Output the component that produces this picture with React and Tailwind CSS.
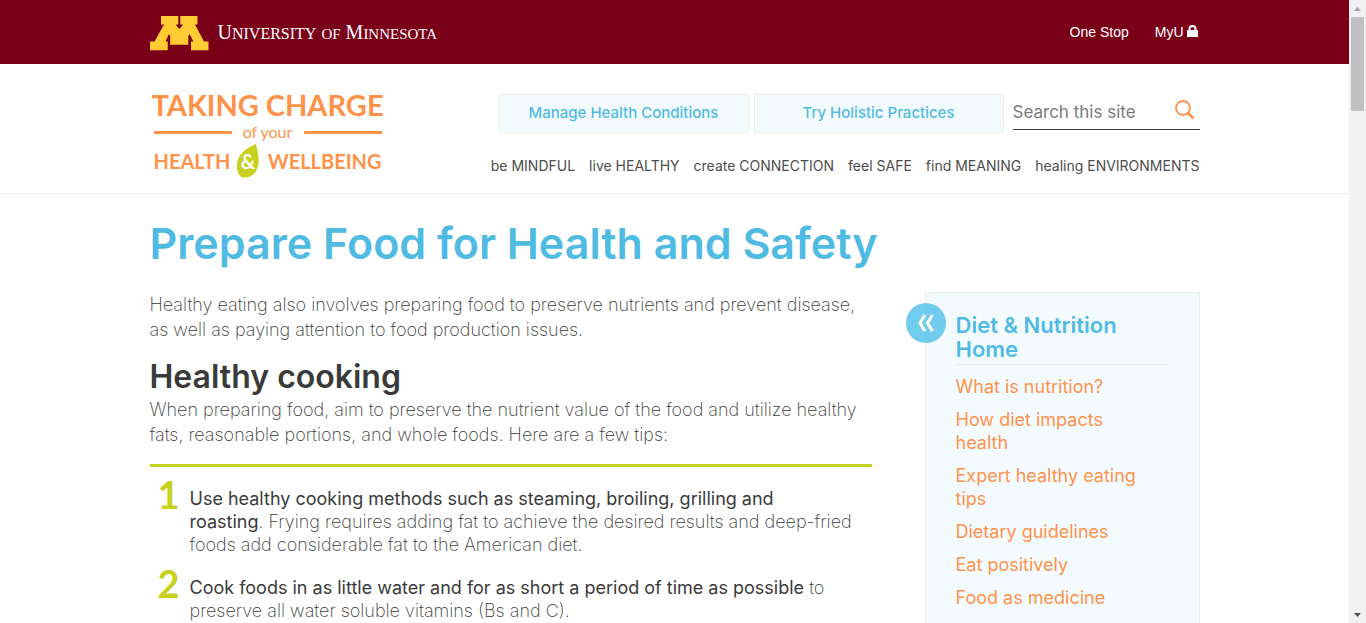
import React from 'react';

const topics = [
  ['be', 'MINDFUL'],
  ['live', 'HEALTHY'],
  ['create', 'CONNECTION'],
  ['feel', 'SAFE'],
  ['find', 'MEANING'],
  ['healing', 'ENVIRONMENTS'],
];

const dietLinks = [
  'What is nutrition?',
  'How diet impacts health',
  'Expert healthy eating tips',
  'Dietary guidelines',
  'Eat positively',
  'Food as medicine',
];

function UniversityBar() {
  return (
    <div className="bg-[#7a0019]">
      <div className="mx-auto flex h-16 max-w-[1050px] items-center justify-between text-white">
        <a href="#university" className="flex items-center gap-[9px] pt-[2px]">
          <svg viewBox="0 0 59 35" className="h-[35px] w-[59px]" aria-hidden="true">
            <path
              fill="#ffcc33"
              d="M11 0H28.300V8.500H26.300V9.500L29.300 13L32.500 9.500V8.500H30.300V0H47.500V8.500H45L54 25.500H58.500V34.200H41V25.500H43.500L39.500 18L38.300 20V28.700H20.200V20L19 18L15.500 25.500H17.700V34.200H0V25.500H4.500L14 8.500H11Z"
            />
          </svg>
          <span className="whitespace-nowrap font-['Liberation_Serif',serif] text-[20px] leading-6">
            U<span className="text-base">NIVERSITY</span> <span className="text-[15px]">OF</span> M
            <span className="text-[15px]">INNESOTA</span>
          </span>
        </a>
        <nav className="flex gap-[26px] font-['Liberation_Sans',sans-serif] text-sm">
          <a href="#onestop">One Stop</a>
          <a href="#myu" className="flex items-center gap-[3px] pr-[2px]">
            MyU
            <svg viewBox="0 0 11 12" className="mb-[2px] h-3 w-[11px]" aria-hidden="true">
              <path
                fill="currentColor"
                fillRule="evenodd"
                d="M1.500 5V4a4 4 0 0 1 8 0v1h.5a1 1 0 0 1 1 1v6H0V6a1 1 0 0 1 1-1ZM3.500 5h4V4a2 2 0 0 0-4 0Z"
              />
            </svg>
          </a>
        </nav>
      </div>
    </div>
  );
}

function SiteLogo() {
  return (
    <a
      href="#home"
      className="flex w-[236px] flex-col items-center whitespace-nowrap font-[Lato,sans-serif] text-[#ff9249]"
    >
      <span className="text-[29px] font-bold leading-[30px]">TAKING CHARGE</span>
      <span className="mt-[2px] flex w-[228px] items-center justify-between">
        <span className="h-[3px] w-[78px] bg-[#ff9249]" />
        <span className="text-base leading-5">of your</span>
        <span className="h-[3px] w-[78px] bg-[#ff9249]" />
      </span>
      <span className="flex w-[228px] items-center justify-between text-xl font-bold leading-[38px]">
        <span>HEALTH</span>
        <span className="mr-[2px] grid place-items-center">
          <svg viewBox="0 0 24 34" className="col-start-1 row-start-1 h-[34px] w-6" aria-hidden="true">
            <path fill="#c8d120" d="M20 0C10 4 0 11 1 23C1 29 4 32 6 33.500C12 34 17 32 20 27C25 18 22 9 20 0Z" />
          </svg>
          <span className="col-start-1 row-start-1 text-white">&amp;</span>
        </span>
        <span>WELLBEING</span>
      </span>
    </a>
  );
}

function SiteHeader() {
  return (
    <header className="border-b border-[#e6eeef]">
      <div className="mx-auto flex max-w-[1050px] justify-between pt-[26px] pb-[13px]">
        <SiteLogo />
        <div className="flex flex-col items-end pt-1">
          <div className="flex">
            <nav className="flex gap-[5px] text-[15px] font-medium text-[#4fbbe3]">
              {['Manage Health Conditions', 'Try Holistic Practices'].map((label) => (
                <a
                  key={label}
                  href="#topic"
                  className="flex h-[39px] w-[250px] items-center justify-center border border-[#ececec] bg-[#f4fbff]"
                >
                  {label}
                </a>
              ))}
            </nav>
            <form className="ml-[9px] flex h-9 w-[187px] items-center border-b border-[#3a3a3a]">
              <input
                type="search"
                aria-label="Search this site"
                placeholder="Search this site"
                className="w-0 flex-1 bg-transparent pt-[3px] text-[17px] outline-none placeholder:text-[#7b7b7b]"
              />
              <button type="button" aria-label="Search" className="mr-[5px] mb-1">
                <svg viewBox="0 0 20 20" className="h-5 w-5" fill="none" stroke="#ff9249" aria-hidden="true">
                  <circle cx="8" cy="8" r="7" strokeWidth="1.800" />
                  <path d="M13 13L18.600 18.600" strokeWidth="2.600" />
                </svg>
              </button>
            </form>
          </div>
          <nav className="mt-[21px] flex gap-[14px] whitespace-nowrap text-sm leading-6 text-[#4d4d4d]">
            {topics.map(([verb, noun]) => (
              <a key={noun} href={'#' + noun.toLowerCase()}>
                {verb} {noun}
              </a>
            ))}
          </nav>
        </div>
      </div>
    </header>
  );
}

function Tip({ number, children }) {
  return (
    <li className="flex">
      <span className="w-[30px] shrink-0 text-right font-[Lato,sans-serif] text-[38px] leading-[30px] font-bold text-[#c8d120]">
        {number}
      </span>
      <p className="pt-2 pl-[10px] text-lg leading-[23px]">{children}</p>
    </li>
  );
}

function Sidebar() {
  return (
    <aside className="relative min-h-[400px] w-[275px] shrink-0 border border-[#ececec] bg-[#f4fbff] px-[30px] pt-5">
      <button
        type="button"
        aria-label="Expand menu"
        className="absolute top-[10px] left-[-20px] flex h-10 w-10 items-center justify-center rounded-full bg-[#4fbfe9]/80"
      >
        <svg viewBox="0 0 18 18" className="h-[18px] w-[18px]" fill="none" stroke="white" strokeWidth="3" aria-hidden="true">
          <path d="M8 1L3 9L8 17M15.500 1L10.500 9L15.500 17" />
        </svg>
      </button>
      <h2 className="border-b border-[#e3eef1] pb-[3px] text-[22px] leading-6 font-semibold text-[#4fbbe3]">
        <a href="#diet" className="block">
          Diet &amp; Nutrition
          <br />
          Home
        </a>
      </h2>
      <ul className="flex flex-col gap-[10px] pt-[10px] pr-5 text-lg leading-[23px] text-[#ff9249]">
        {dietLinks.map((label) => (
          <li key={label}>
            <a href="#diet">{label}</a>
          </li>
        ))}
      </ul>
    </aside>
  );
}

function ScrollArrow({ down }) {
  return (
    <svg viewBox="0 0 17 17" className="h-[17px] w-[17px]" aria-hidden="true">
      {down ? <path fill="#505050" d="M5 7H12L8.500 11Z" /> : <path fill="#a3a3a3" d="M5 11H12L8.500 7Z" />}
    </svg>
  );
}

export default function App() {
  return (
    <div className="flex h-screen overflow-hidden bg-white font-[Inter,sans-serif] text-[#3a3a3a]">
      <div className="min-w-0 flex-1 overflow-hidden">
        <UniversityBar />
        <SiteHeader />
        <main className="mx-auto max-w-[1050px]">
          <h1 className="pt-6 text-[43px] leading-[50px] font-semibold text-[#4fbbe3]">
            Prepare Food for Health and Safety
          </h1>
          <div className="flex items-start justify-between pt-6">
            <article className="w-[740px] text-lg leading-[25px] font-extralight">
              <p>
                Healthy eating also involves preparing food to preserve nutrients and prevent disease,
                <br />
                as well as paying attention to food production issues.
              </p>
              <h2 className="pt-[15px] text-[32px] leading-10 font-semibold">Healthy cooking</h2>
              <p>
                When preparing food, aim to preserve the nutrient value of the food and utilize healthy
                <br />
                fats, reasonable portions, and whole foods. Here are a few tips:
              </p>
              <ol className="mt-[17px] flex w-[722px] flex-col gap-3 border-t-3 border-[#c8d120] pt-3">
                <Tip number="1">
                  <span className="font-normal">
                    Use healthy cooking methods such as steaming, broiling, grilling and
                    <br />
                    roasting
                  </span>
                  . Frying requires adding fat to achieve the desired results and deep-fried
                  <br />
                  foods add considerable fat to the American diet.
                </Tip>
                <Tip number="2">
                  <span className="font-normal">
                    Cook foods in as little water and for as short a period of time as possible
                  </span>{' '}
                  to
                  <br />
                  preserve all water soluble vitamins (Bs and C).
                </Tip>
              </ol>
            </article>
            <Sidebar />
          </div>
        </main>
      </div>
      <div className="flex w-[17px] shrink-0 flex-col items-center bg-[#f1f1f1]" aria-hidden="true">
        <ScrollArrow />
        <div className="h-[94px] w-[13px] bg-[#c1c1c1]" />
        <div className="flex-1" />
        <ScrollArrow down />
      </div>
    </div>
  );
}
